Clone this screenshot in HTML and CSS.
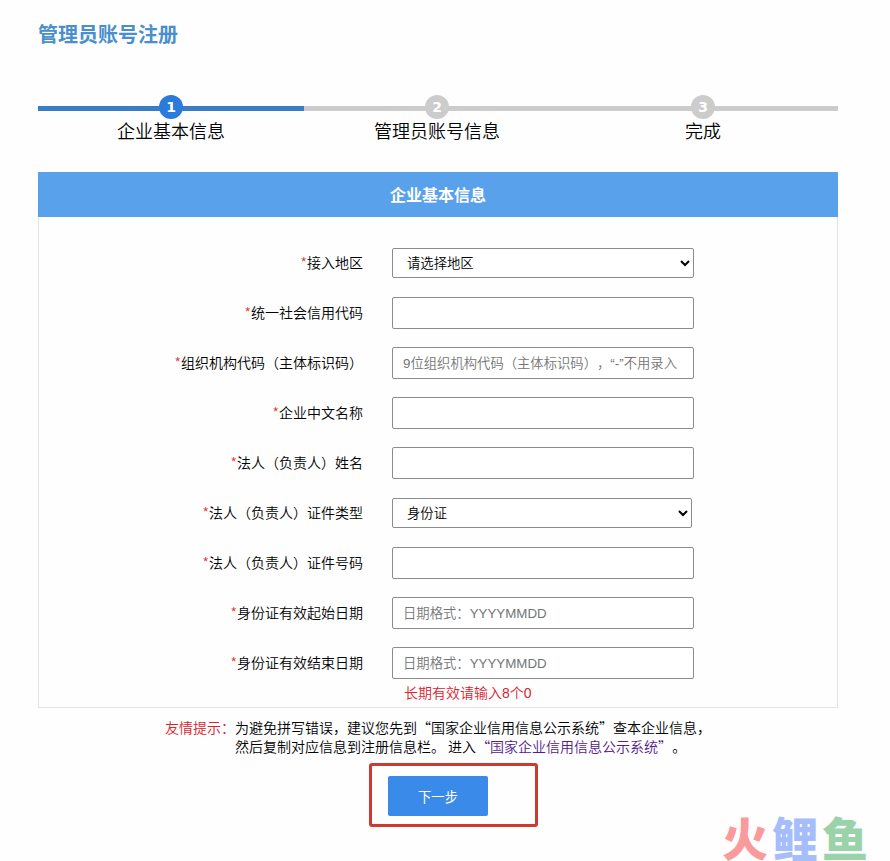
FILE: index.html
```html
<!DOCTYPE html>
<html lang="zh-CN">

<head>
    <meta charset="UTF-8">
    <meta name="viewport" content="width=device-width, initial-scale=1.0">
    <title>管理员账号注册</title>
    <link rel="stylesheet" href="styles.css">
</head>

<body>
    <main class="page">
        <h1>管理员账号注册</h1>

        <ol class="steps">
            <li class="step active"><span class="step-num">1</span><span class="step-name">企业基本信息</span></li>
            <li class="step"><span class="step-num">2</span><span class="step-name">管理员账号信息</span></li>
            <li class="step"><span class="step-num">3</span><span class="step-name">完成</span></li>
        </ol>

        <form id="regForm">
            <section class="panel">
                <h2>企业基本信息</h2>
                <div class="fields">
                    <div class="row">
                        <label for="area"><i>*</i>接入地区</label>
                        <select id="area">
                            <option>请选择地区</option>
                        </select>
                    </div>
                    <div class="row">
                        <label for="creditCode"><i>*</i>统一社会信用代码</label>
                        <input type="text" id="creditCode">
                    </div>
                    <div class="row">
                        <label for="orgCode"><i>*</i>组织机构代码（主体标识码）</label>
                        <input type="text" id="orgCode" placeholder="9位组织机构代码（主体标识码），“-”不用录入">
                    </div>
                    <div class="row">
                        <label for="companyName"><i>*</i>企业中文名称</label>
                        <input type="text" id="companyName">
                    </div>
                    <div class="row">
                        <label for="legalName"><i>*</i>法人（负责人）姓名</label>
                        <input type="text" id="legalName">
                    </div>
                    <div class="row">
                        <label for="certType"><i>*</i>法人（负责人）证件类型</label>
                        <select id="certType" class="cert-type">
                            <option>身份证</option>
                        </select>
                    </div>
                    <div class="row">
                        <label for="certNo"><i>*</i>法人（负责人）证件号码</label>
                        <input type="text" id="certNo">
                    </div>
                    <div class="row">
                        <label for="startDate"><i>*</i>身份证有效起始日期</label>
                        <input type="text" id="startDate" placeholder="日期格式：YYYYMMDD">
                    </div>
                    <div class="row">
                        <label for="endDate"><i>*</i>身份证有效结束日期</label>
                        <input type="text" id="endDate" placeholder="日期格式：YYYYMMDD">
                        <p class="note">长期有效请输入8个0</p>
                    </div>
                </div>
            </section>

            <div class="tips">
                <strong>友情提示：</strong>
                <p>为避免拼写错误，建议您先到“国家企业信用信息公示系统”查本企业信息，<br>然后复制对应信息到注册信息栏。 进入<a href="#">“国家企业信用信息公示系统”</a>。</p>
            </div>

            <div class="actions">
                <div class="highlight">
                    <button type="button">下一步</button>
                </div>
            </div>
        </form>
    </main>

    <div class="watermark"><span class="red">火</span><span class="blue">鲤</span><span class="green">鱼</span></div>
</body>
</html>
```

FILE: styles.css
```css
* {
    box-sizing: border-box;
}

body {
    position: relative;
    margin: 0;
    min-height: 100vh;
    background-color: #fefefe;
    color: #000;
    font-family: "Noto Sans CJK SC", sans-serif;
    font-size: 14px;
    font-weight: 350;
    text-spacing-trim: space-all;
}

.page {
    padding: 19px 52px 0 38px;
}

h1 {
    margin: 0;
    color: #4a8fcb;
    font-size: 20px;
    line-height: 30px;
}

.steps {
    display: flex;
    margin: 46px 0 0;
    padding: 0;
    list-style: none;
    background: linear-gradient(#ccc, #ccc) 0 11px / 100% 5px no-repeat;
}

.step {
    width: 33.25%;
    display: flex;
    flex-direction: column;
    align-items: center;
}

.step.active {
    background: linear-gradient(#3b7dc4, #3b7dc4) 0 11px / 100% 5px no-repeat;
}

.step-num {
    width: 24px;
    height: 24px;
    border-radius: 50%;
    background-color: #ccc;
    color: white;
    font: bold 14px/24px "DejaVu Sans", sans-serif;
    text-align: center;
}

.active .step-num {
    background-color: #2a7bdc;
}

.step-name {
    font-size: 18px;
    line-height: 22px;
}

.panel {
    margin-top: 31px;
    border: 1px solid #e4e4e4;
    border-top: none;
}

h2 {
    margin: 0 -1px;
    background-color: #5aa1ec;
    color: white;
    font-size: 16px;
    line-height: 45px;
    text-align: center;
}

.fields {
    display: grid;
    gap: 18px;
    padding-top: 30px;
}

.row {
    display: grid;
    grid-template-columns: 324px minmax(0, 302px);
    column-gap: 29px;
    align-items: center;
    min-height: 32px;
}

label {
    padding-bottom: 2px;
    line-height: 30px;
    text-align: right;
}

label i {
    color: #e0403c;
    font-style: normal;
}

input,
select {
    width: 100%;
    height: 32px;
    padding: 0 10px;
    border: 1px solid #8c8c8c;
    border-radius: 2px;
    background-color: white;
    font-family: "Liberation Sans", "Noto Sans CJK SC", sans-serif;
    font-weight: 350;
    text-spacing-trim: space-all;
}

select {
    height: 30px;
    color: #000;
}

.cert-type {
    width: 300px;
}

input::placeholder {
    color: #757575;
}

.note {
    grid-column: 2;
    margin: 0;
    padding-left: 12px;
    color: #d9232e;
    font-family: "Liberation Sans", "Noto Sans CJK SC", sans-serif;
    line-height: 28px;
}

.tips {
    display: flex;
    justify-content: center;
    margin-top: 10px;
    line-height: 19px;
    white-space: nowrap;
}

.tips strong {
    color: #d9232e;
    font-weight: 350;
}

.tips p {
    margin: 0;
}

.tips a {
    color: #551a8b;
    text-decoration: none;
}

.actions {
    display: flex;
    justify-content: center;
    margin-top: 7px;
}

/* red frame around the next button */
.highlight {
    margin-left: 31px;
    padding: 10px 47px 8px 16px;
    border: 3px solid #cf3a30;
    border-radius: 3px;
}

button {
    display: block;
    width: 100px;
    height: 40px;
    border: none;
    border-radius: 2px;
    background-color: #3a8aea;
    color: white;
    font-family: "Noto Sans CJK SC", sans-serif;
    cursor: pointer;
}

.watermark {
    position: absolute;
    right: 22px;
    bottom: 2px;
    display: flex;
    gap: 4px;
    font-size: 46px;
    font-weight: 900;
    line-height: 46px;
}

.red {
    color: #fb9a9c;
}

.blue {
    color: #a5bdfb;
}

.green {
    color: #9ad3a9;
}
```
